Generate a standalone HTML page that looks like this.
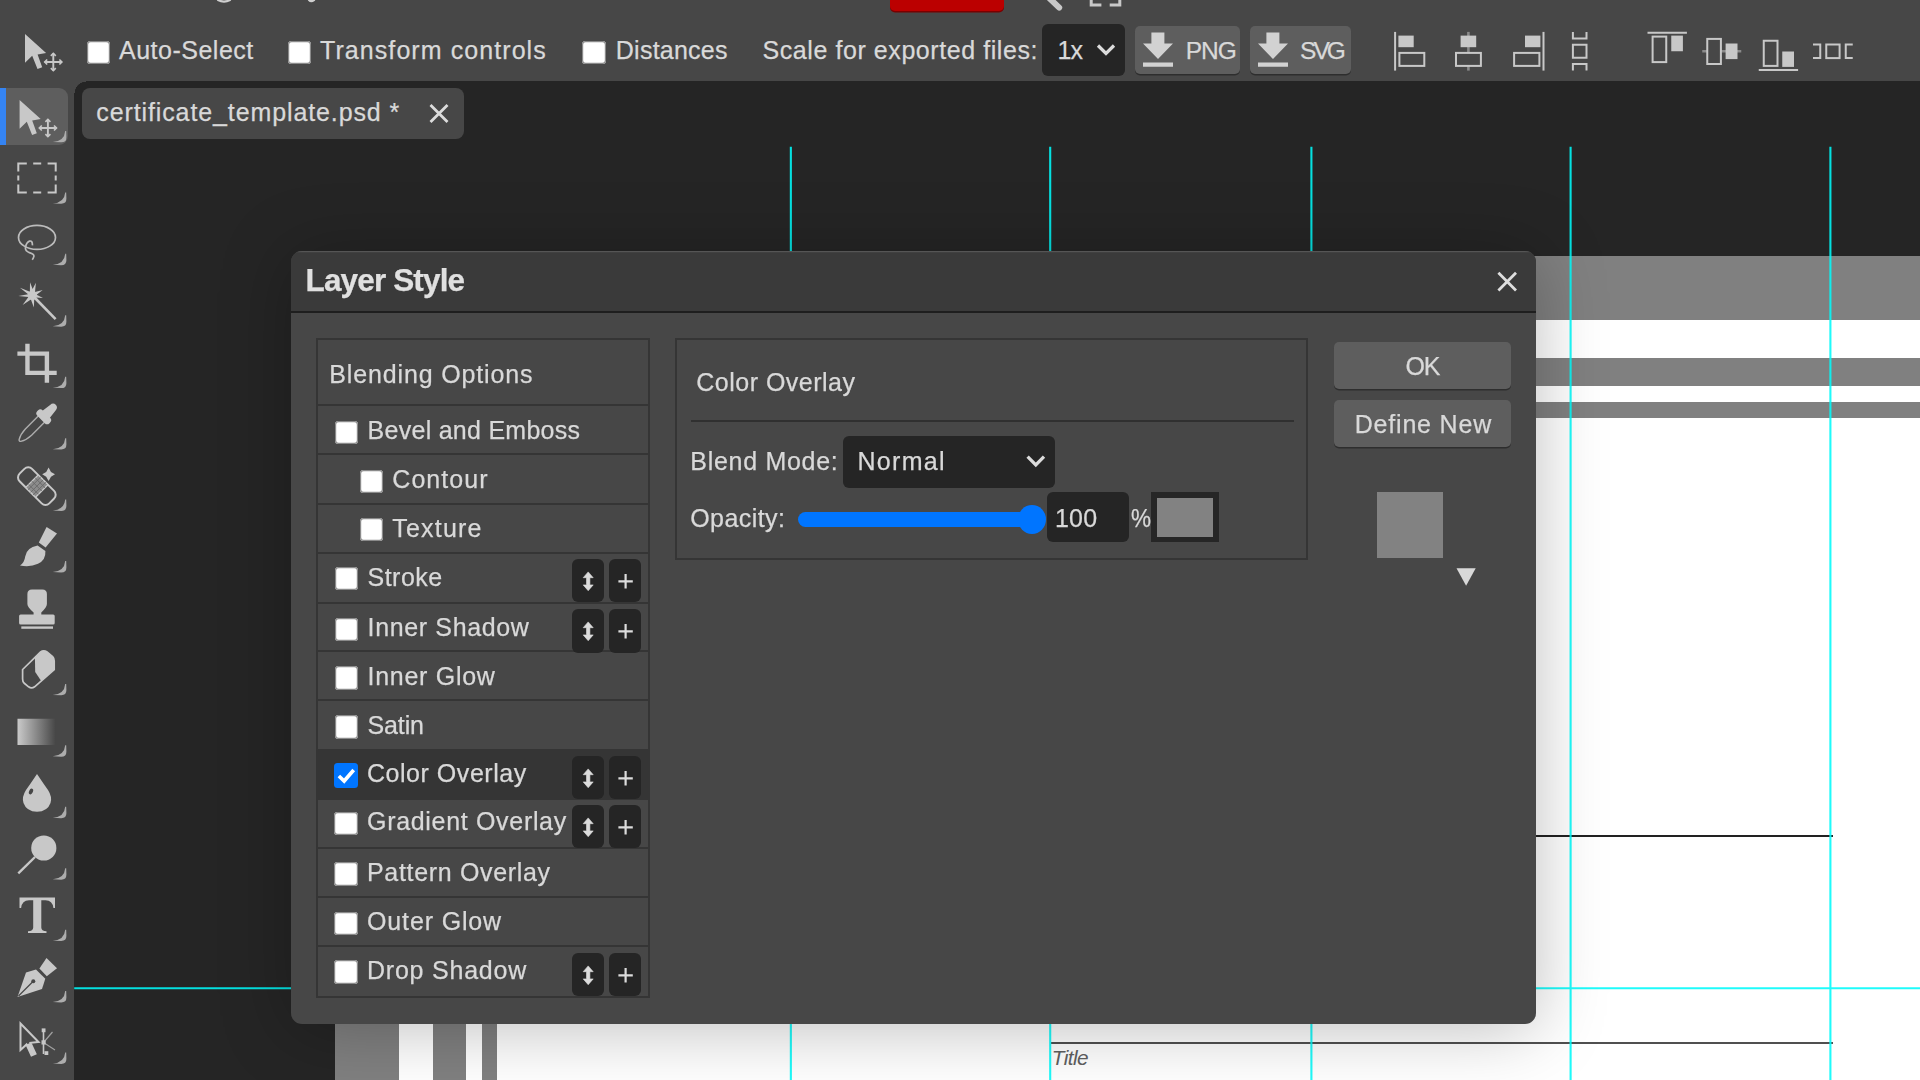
<!DOCTYPE html>
<html><head><meta charset="utf-8"><title>Photopea</title>
<style>
html,body{margin:0;padding:0;width:1920px;height:1080px;overflow:hidden;background:#474747}
body{position:relative;font-family:"Liberation Sans",sans-serif}
#w{position:absolute;left:0;top:0;width:1920px;height:1080px;overflow:hidden}
.b{position:absolute;display:block}
.t{position:absolute;white-space:pre;font-family:"Liberation Sans",sans-serif;-webkit-text-stroke:0.25px currentColor}
</style></head><body>
<div id="w">
<div class="b" style="left:74.20px;top:80.60px;width:1845.80px;height:999.40px;background:#252525;border-top-left-radius:11px;"></div>
<div class="b" style="left:335.4px;top:255.6px;width:1584.6px;height:824.4px;background:#fff;overflow:hidden">
<div class="b" style="left:0.00px;top:0.00px;width:1584.60px;height:64.60px;background:#808080"></div>
<div class="b" style="left:97.70px;top:102.10px;width:1486.90px;height:28.80px;background:#808080"></div>
<div class="b" style="left:146.50px;top:146.90px;width:1438.10px;height:15.20px;background:#808080"></div>
<div class="b" style="left:0.00px;top:0.00px;width:64.00px;height:824.40px;background:#808080"></div>
<div class="b" style="left:97.70px;top:102.10px;width:32.50px;height:722.30px;background:#808080"></div>
<div class="b" style="left:146.50px;top:146.90px;width:15.35px;height:677.50px;background:#808080"></div>
<div class="b" style="left:715.60px;top:579.20px;width:782.00px;height:2.00px;background:#222"></div>
<div class="b" style="left:715.60px;top:786.40px;width:782.00px;height:2.00px;background:#505050"></div>
</div>
<div class="t" style="left:1051.80px;top:1045.44px;font-size:20.8px;line-height:25px;letter-spacing:-0.601px;color:#606060;font-style:italic;-webkit-text-stroke:0;">Title</div>
<svg class="b" style="left:0;top:0" width="1920" height="1080" viewBox="0 0 1920 1080"><path d="M790.85,146.7V1080 M1050.2,146.7V1080 M1311.4,146.7V1080 M1570.6,146.7V1080 M1830.4,146.7V1080 M74.2,988.3H1920" stroke="#00fafa" stroke-opacity=".88" stroke-width="2.1" fill="none"/></svg>
<div class="b" style="left:0.00px;top:0.00px;width:1920.00px;height:80.60px;background:#474747;"></div>
<div class="b" style="left:74.2px;top:80.6px;width:12px;height:12px;background:radial-gradient(circle at 100% 100%, rgba(0,0,0,0) 11px, #474747 11.5px)"></div>
<div class="b" style="left:0.00px;top:80.60px;width:74.20px;height:999.40px;background:#474747;"></div>
<div class="b" style="left:889.70px;top:-10.00px;width:114.10px;height:21.00px;background:#bb0000;border-radius:5px;box-shadow:0 1.5px 0 #7a0000;"></div>
<svg class="b" style="left:0;top:0" width="1920" height="14" viewBox="0 0 1920 14"><g fill="none" stroke="#cfcfcf" stroke-width="2.2" stroke-linecap="round"><path d="M218,0 Q224,3.2 230,0"/><path d="M309,0 Q311,2.2 314,0.2"/><path d="M1046,-5 L1059.2,7.6" stroke-width="6" stroke="#c8c8c8"/><path d="M1091.2,-2 V5 H1101.4 M1119.8,-2 V5 H1109.7" stroke-width="3" stroke-linecap="butt" stroke="#c8c8c8"/></g></svg>
<div class="b" style="left:86.70px;top:40.50px;width:23.3px;height:23.3px;background:#fff;border-radius:3.5px;box-shadow:inset 0 0 0 1.2px #8a8a8a"></div>
<div class="t" style="left:119.00px;top:35.19px;font-size:25px;line-height:30px;letter-spacing:0.505px;color:#d9d9d9;">Auto-Select</div>
<div class="b" style="left:287.50px;top:40.50px;width:23.3px;height:23.3px;background:#fff;border-radius:3.5px;box-shadow:inset 0 0 0 1.2px #8a8a8a"></div>
<div class="t" style="left:320.00px;top:35.19px;font-size:25px;line-height:30px;letter-spacing:1.076px;color:#d9d9d9;">Transform controls</div>
<div class="b" style="left:582.30px;top:40.50px;width:23.3px;height:23.3px;background:#fff;border-radius:3.5px;box-shadow:inset 0 0 0 1.2px #8a8a8a"></div>
<div class="t" style="left:615.80px;top:35.19px;font-size:25px;line-height:30px;letter-spacing:0.244px;color:#d9d9d9;">Distances</div>
<div class="t" style="left:762.50px;top:35.19px;font-size:25px;line-height:30px;letter-spacing:0.573px;color:#d9d9d9;">Scale for exported files:</div>
<div class="b" style="left:1041.70px;top:24.20px;width:83.30px;height:51.60px;background:#252525;border-radius:6px;"></div>
<div class="t" style="left:1057.50px;top:35.19px;font-size:25px;line-height:30px;letter-spacing:-0.875px;color:#d9d9d9;">1x</div>
<svg class="b" style="left:1095px;top:42px" width="24" height="16" viewBox="0 0 24 16"><path d="M3,3.5 L11,11.5 L19,3.5" fill="none" stroke="#dcdcdc" stroke-width="3.2"/></svg>
<div class="b" style="left:1135.00px;top:25.80px;width:104.70px;height:48.40px;background:#5e5e5e;border-radius:5px;box-shadow:0 1.5px 0 #2e2e2e;"></div>
<div class="b" style="left:1250.00px;top:25.80px;width:100.80px;height:48.40px;background:#5e5e5e;border-radius:5px;box-shadow:0 1.5px 0 #2e2e2e;"></div>
<svg class="b" style="left:1141.30px;top:30px" width="34" height="40" viewBox="0 0 34 40"><path d="M10.4,2.5 H23.4 V13.5 H32 L17,29 L2,13.5 H10.4 Z M2,32.5 H32 V36.7 H2 Z" fill="#d2d2d2"/></svg>
<div class="t" style="left:1185.80px;top:35.86px;font-size:24.5px;line-height:29px;letter-spacing:-1.071px;color:#d9d9d9;">PNG</div>
<svg class="b" style="left:1256.30px;top:30px" width="34" height="40" viewBox="0 0 34 40"><path d="M10.4,2.5 H23.4 V13.5 H32 L17,29 L2,13.5 H10.4 Z M2,32.5 H32 V36.7 H2 Z" fill="#d2d2d2"/></svg>
<div class="t" style="left:1300.00px;top:35.86px;font-size:24.5px;line-height:29px;letter-spacing:-2.948px;color:#d9d9d9;">SVG</div>
<svg class="b" style="left:1380px;top:20px" width="500" height="60" viewBox="1380 20 500 60"><g fill="none" stroke="#c8c8c8" stroke-width="2"><path d="M1395.1,31.9 V70.6"/><rect x="1398.4" y="35.6" width="15.3" height="11.6" fill="#c8c8c8" stroke="none"/><rect x="1399.4" y="52.9" width="24.9" height="13"/><path d="M1468.4,31.9 V70.6" stroke="#8a8a8a" stroke-width="2.6"/><rect x="1460.6" y="35.6" width="15.6" height="11.6" fill="#c8c8c8" stroke="none"/><rect x="1456" y="52.9" width="24.9" height="13" fill="#474747"/><path d="M1543.5,31.9 V70.6"/><rect x="1525" y="35.6" width="15.4" height="11.6" fill="#c8c8c8" stroke="none"/><rect x="1514.1" y="52.9" width="25.3" height="13"/><path d="M1572.9,31.9 V38.4 H1586.5 V31.9"/><rect x="1572.9" y="44.75" width="13.6" height="13"/><path d="M1572.9,70.6 V64.1 H1586.5 V70.6"/><path d="M1647.5,32.8 H1686.9"/><rect x="1652.6" y="36.6" width="13.65" height="25.5"/><rect x="1671.25" y="35.6" width="11.65" height="15.65" fill="#c8c8c8" stroke="none"/><path d="M1702.25,51.3 H1741.25" stroke="#8a8a8a" stroke-width="2.6"/><rect x="1707.25" y="38.9" width="13.65" height="25.1" fill="#474747"/><rect x="1725.6" y="43.5" width="11.9" height="15.6" fill="#c8c8c8" stroke="none"/><path d="M1758.75,69.9 H1798.1"/><rect x="1763.75" y="40.75" width="13.75" height="25.15"/><rect x="1782.25" y="51.5" width="11.75" height="15.4" fill="#c8c8c8" stroke="none"/><path d="M1813,44.5 H1820.25 V58.1 H1813"/><rect x="1826.25" y="44.5" width="13.35" height="13.6"/><path d="M1852.75,44.5 H1845.75 V58.1 H1852.75"/></g></svg>
<svg class="b" style="left:25.3px;top:33.9px;overflow:visible" width="40" height="40"><path d="M0,0 V28.7 L7.2,21.7 L12.5,34.9 L17.2,33.2 L12.6,20.4 L21.1,19 Z" fill="#c8c8c8" stroke="none"/><g stroke="#c8c8c8" stroke-width="1.9" fill="none"><path d="M19.6,28 H37 M28.3,19.3 V36.7"/><path d="M22.2,25.5 L19.7,28 L22.2,30.5 M34.4,25.5 L36.9,28 L34.4,30.5 M25.8,21.9 L28.3,19.4 L30.8,21.9 M25.8,34.1 L28.3,36.6 L30.8,34.1" stroke-width="1.6"/></g></svg>
<div class="b" style="left:82.00px;top:88.30px;width:382.20px;height:50.70px;background:#474747;border-radius:8px;"></div>
<div class="t" style="left:96.25px;top:96.89px;font-size:25px;line-height:30px;letter-spacing:0.890px;color:#d9d9d9;">certificate_template.psd *</div>
<svg class="b" style="left:426px;top:101px" width="26" height="26" viewBox="426 101 26 26"><path d="M430.5,105 L447.5,122 M447.5,105 L430.5,122" stroke="#dcdcdc" stroke-width="2.8" fill="none"/></svg>
<div class="b" style="left:0.00px;top:88.40px;width:6.00px;height:56.40px;background:#3584f2;"></div>
<div class="b" style="left:6.00px;top:88.40px;width:61.60px;height:56.40px;background:#5e5e5e;border-radius:0 9px 9px 0;"></div>
<svg class="b" style="left:0;top:80px" width="74" height="1000" viewBox="0 80 74 1000"><g fill="none" stroke="#c8c8c8" stroke-width="2"><path d="M66.2,130.95 L66.4,137.15 Q66.5,142.35 61.2,142.35 L52.8,141.95 Q64.4,141.15 65.2,130.95 Z" fill="#adadad" stroke="none"/><path d="M66.2,192.39 L66.4,198.59 Q66.5,203.79 61.2,203.79 L52.8,203.39 Q64.4,202.59 65.2,192.39 Z" fill="#adadad" stroke="none"/><path d="M66.2,253.83 L66.4,260.03 Q66.5,265.23 61.2,265.23 L52.8,264.83 Q64.4,264.03 65.2,253.83 Z" fill="#adadad" stroke="none"/><path d="M66.2,315.27 L66.4,321.47 Q66.5,326.67 61.2,326.67 L52.8,326.27 Q64.4,325.47 65.2,315.27 Z" fill="#adadad" stroke="none"/><path d="M66.2,376.71 L66.4,382.91 Q66.5,388.11 61.2,388.11 L52.8,387.71 Q64.4,386.91 65.2,376.71 Z" fill="#adadad" stroke="none"/><path d="M66.2,438.15 L66.4,444.35 Q66.5,449.55 61.2,449.55 L52.8,449.15 Q64.4,448.35 65.2,438.15 Z" fill="#adadad" stroke="none"/><path d="M66.2,499.59 L66.4,505.79 Q66.5,510.99 61.2,510.99 L52.8,510.59 Q64.4,509.79 65.2,499.59 Z" fill="#adadad" stroke="none"/><path d="M66.2,561.03 L66.4,567.23 Q66.5,572.43 61.2,572.43 L52.8,572.03 Q64.4,571.23 65.2,561.03 Z" fill="#adadad" stroke="none"/><path d="M66.2,683.91 L66.4,690.11 Q66.5,695.31 61.2,695.31 L52.8,694.91 Q64.4,694.11 65.2,683.91 Z" fill="#adadad" stroke="none"/><path d="M66.2,745.35 L66.4,751.55 Q66.5,756.75 61.2,756.75 L52.8,756.35 Q64.4,755.55 65.2,745.35 Z" fill="#adadad" stroke="none"/><path d="M66.2,806.79 L66.4,812.99 Q66.5,818.19 61.2,818.19 L52.8,817.79 Q64.4,816.99 65.2,806.79 Z" fill="#adadad" stroke="none"/><path d="M66.2,868.23 L66.4,874.43 Q66.5,879.63 61.2,879.63 L52.8,879.23 Q64.4,878.43 65.2,868.23 Z" fill="#adadad" stroke="none"/><path d="M66.2,929.67 L66.4,935.87 Q66.5,941.07 61.2,941.07 L52.8,940.67 Q64.4,939.87 65.2,929.67 Z" fill="#adadad" stroke="none"/><path d="M66.2,991.11 L66.4,997.31 Q66.5,1002.51 61.2,1002.51 L52.8,1002.11 Q64.4,1001.31 65.2,991.11 Z" fill="#adadad" stroke="none"/><path d="M66.2,1052.55 L66.4,1058.75 Q66.5,1063.95 61.2,1063.95 L52.8,1063.55 Q64.4,1062.75 65.2,1052.55 Z" fill="#adadad" stroke="none"/><g transform="translate(19.6,100)"><path d="M0,0 V28.7 L7.2,21.7 L12.5,34.9 L17.2,33.2 L12.6,20.4 L21.1,19 Z" fill="#c8c8c8" stroke="none"/><g stroke="#c8c8c8" stroke-width="1.9" fill="none"><path d="M19.6,28 H37 M28.3,19.3 V36.7"/><path d="M22.2,25.5 L19.7,28 L22.2,30.5 M34.4,25.5 L36.9,28 L34.4,30.5 M25.8,21.9 L28.3,19.4 L30.8,21.9 M25.8,34.1 L28.3,36.6 L30.8,34.1" stroke-width="1.6"/></g></g><path d="M18.3,171.6 V163.5 H26.8 M33.2,163.5 H41.2 M47.6,163.5 H55.7 V171.6 M55.7,175.6 V180.6 M55.7,184.6 V192.4 H47.6 M41.2,192.4 H33.2 M26.8,192.4 H18.3 V184.6 M18.3,180.6 V175.6" stroke-width="2"/><ellipse cx="37" cy="237.4" rx="18.5" ry="12" stroke-width="1.7" stroke="#bcbcbc"/><path d="M32.4,245.4 Q32.6,240.4 29.5,241.1 Q26.3,242.4 25.6,247 Q24.6,250.6 29.4,252.6 Q34.6,254.1 33.8,256.6 Q33.3,258.6 32.2,259.8" stroke-width="1.7" stroke="#bcbcbc"/><path d="M35,298 L55.6,319.2" stroke-width="2.6"/><circle cx="32.3" cy="295.3" r="4.6" fill="#c8c8c8" stroke="none"/><path d="M30.0,282.3 L32.6,289.0 L35.9,282.7 L35.0,292.0 L42.7,290.1 L36.6,294.8 L43.0,297.9 L36.0,297.4 L37.2,300.2 L34.2,299.2 L33.9,307.6 L30.9,299.4 L22.6,305.0 L28.4,297.0 L18.4,295.9 L28.1,294.2 L20.0,287.8 L29.9,291.7 Z" fill="#c8c8c8" stroke="none"/><path d="M27.45,343.7 V372.9 H56.7 M17.4,353.65 H46.9 V382.8" stroke-width="4.4"/><g transform="translate(43.3,417.2) rotate(45)"><path d="M-4.4,2 V21 Q-4.2,28 -1.2,33 Q0,34.4 1.2,33 Q4.2,28 4.4,21 V2" stroke-width="1.4" stroke="#adadad"/><rect x="-8.6" y="-4.4" width="17.2" height="7.6" rx="3.4" fill="#c8c8c8" stroke="none"/><path d="M-5.4,-2 L-3.9,-13.5 Q-3.6,-17.6 0,-17.6 Q3.6,-17.6 3.9,-13.5 L5.4,-2 Z" fill="#c8c8c8" stroke="none"/></g><g transform="rotate(45 36.85 486.1)"><rect x="15.85" y="477.3" width="42" height="17.6" rx="5.4" stroke-width="2"/><rect x="29.9" y="478" width="13.9" height="16.2" fill="#8c8c8c" stroke="none"/><path d="M29.9,477.3 V494.9 M43.8,477.3 V494.9" stroke-width="1.3"/><path d="M33.2,477 V495 M36.85,477 V495 M40.5,477 V495 M30,481.5 H44 M30,486.1 H44 M30,490.7 H44" stroke="#6a6a6a" stroke-width="0.9"/></g><path d="M48.6,467.6 L51,471.9 L55,474.3 L51,476.7 L48.6,481 L46.2,476.7 L42.2,474.3 L46.2,471.9 Z" fill="#c8c8c8" stroke="none"/><path d="M46.6,527 L57,533.6 L45.6,547.6 L38.8,542.6 Z" fill="#c8c8c8" stroke="none"/><path d="M37.6,545.5 L45.4,551 Q46,560 38,563.8 Q30,567.5 20,565.5 Q24.5,562.5 25.2,556.5 Q26.5,547.5 37.6,545.5 Z" fill="#c8c8c8" stroke="none"/><path d="M27.4,594 Q27.4,589.4 32,589.4 H42.3 Q46.9,589.4 46.9,594 V604 Q46.9,607 41.3,612.6 V614.4 H53.2 Q54.7,614.4 54.7,615.9 V622.9 Q54.7,624.4 53.2,624.4 H20.6 Q19.1,624.4 19.1,622.9 V615.9 Q19.1,614.4 20.6,614.4 H33.6 V612.6 Q27.4,607 27.4,604 Z" fill="#c8c8c8" stroke="none"/><path d="M21.3,627.6 H53" stroke-width="2.4"/><path d="M22.6,669.5 L40.6,652 Q43.6,649.6 47,652 L52.6,656.6 Q54.2,658.2 54.2,661 V669.6 L34.6,686.8 Q31.6,689 28.6,686.8 L24,683 Q22.6,681.6 22.6,679 Z" stroke-width="1.7"/><path d="M34.9,657.6 L40.6,652 Q43.6,649.6 47,652 L52.6,656.6 Q54.2,658.2 54.2,661 V669.6 L41.2,681 L35.2,672 Z" fill="#c8c8c8" stroke="none"/><defs><linearGradient id="gr" x1="0" x2="1" y1="0" y2="0"><stop offset="0" stop-color="#cacaca"/><stop offset="1" stop-color="#474747"/></linearGradient></defs><rect x="17.5" y="718.75" width="38" height="26.25" fill="url(#gr)" stroke="none"/><path d="M37,774 Q43,783 48,790 Q52.5,797 50.5,803 Q47.5,811.5 37,811.8 Q26.5,811.5 23.5,803 Q21.5,797 26,790 Q31,783 37,774 Z" fill="#c8c8c8" stroke="none"/><ellipse cx="31" cy="791.5" rx="1.9" ry="3" transform="rotate(25 31 791.5)" fill="#474747" stroke="none"/><circle cx="43.8" cy="848" r="12.6" fill="#c8c8c8" stroke="none"/><path d="M35,857 L18.3,873.3" stroke-width="2.4"/><path d="M19.5,897.5 H55 V908 H53.4 Q52.5,900.2 45.5,900.2 H41.3 V927.5 Q41.3,931 46.5,931.3 V933 H28 V931.3 Q33.2,931 33.2,927.5 V900.2 H29 Q22,900.2 21.1,908 H19.5 Z" fill="#c8c8c8" stroke="none"/><path d="M46.5,958 L57,968.2 L46.8,976.2 L39.4,968.4 Z" fill="#c8c8c8" stroke="none"/><path d="M36,969.5 L45.3,978.7 L42,989 L17.5,997 L26,972.5 Z" fill="#c8c8c8" stroke="none"/><path d="M18.5,996 L32.5,982" stroke="#474747" stroke-width="1.2"/><circle cx="33.3" cy="981.2" r="2" fill="#474747" stroke="none"/><path d="M20.5,1023.5 V1050 L26.5,1044.5 L31.5,1055.5 L35.5,1053.8 L30.5,1042.8 L38.5,1042 Z" stroke-width="2" /><path d="M26.5,1044.5 L31.5,1055.5 L35.5,1053.8 L30.5,1042.8 Z" fill="#c8c8c8" stroke="none"/><path d="M43.5,1031 V1054" stroke-width="1.6"/><path d="M43.5,1042.5 L52.5,1032 M43.5,1042.5 L55,1050" stroke-width="1.2" stroke="#a0a0a0"/><rect x="41.7" y="1028.4" width="3.8" height="3.8" fill="#c8c8c8" stroke="none"/><rect x="41.5" y="1040.3" width="4.2" height="4.2" fill="#c8c8c8" stroke="none"/><rect x="44.5" y="1051.2" width="3.8" height="3.8" fill="#c8c8c8" stroke="none"/></g></svg>
<div class="b" style="left:290.6px;top:250.6px;width:1245.4px;height:773.2px;background:#474747;border-radius:11px;box-shadow:0 5px 70px rgba(0,0,0,.26);overflow:hidden"><div class="b" style="left:0;top:0;width:100%;height:60px;background:#3a3a3a;box-shadow:inset 0 1.3px 0 #555"></div><div class="b" style="left:0;top:60px;width:100%;height:2px;background:#1e1e1e"></div></div>
<div class="b" style="left:0;top:0;width:1920px;height:1080px;will-change:transform">
<div class="t" style="left:305.60px;top:260.99px;font-size:31.5px;line-height:38px;letter-spacing:-0.865px;color:#e0e0e0;font-weight:700;">Layer Style</div>
<svg class="b" style="left:1494px;top:268px" width="27" height="27" viewBox="1494 268 27 27"><path d="M1498.4,272.8 L1516,290.4 M1516,272.8 L1498.4,290.4" stroke="#dedede" stroke-width="2.8" fill="none"/></svg>
<div class="b" style="left:316.00px;top:338.00px;width:334.00px;height:660.00px;background:#353535;"></div>
<div class="b" style="left:318.00px;top:340.00px;width:330.00px;height:656.00px;background:#474747;"></div>
<div class="b" style="left:317.90px;top:750.00px;width:329.90px;height:48.60px;background:#353535;"></div>
<div class="b" style="left:317.90px;top:404.30px;width:329.90px;height:2.00px;background:#353535;"></div>
<div class="b" style="left:317.90px;top:453.20px;width:329.90px;height:2.00px;background:#353535;"></div>
<div class="b" style="left:317.90px;top:502.70px;width:329.90px;height:2.00px;background:#353535;"></div>
<div class="b" style="left:317.90px;top:552.30px;width:329.90px;height:2.00px;background:#353535;"></div>
<div class="b" style="left:317.90px;top:601.50px;width:329.90px;height:2.00px;background:#353535;"></div>
<div class="b" style="left:317.90px;top:650.20px;width:329.90px;height:2.00px;background:#353535;"></div>
<div class="b" style="left:317.90px;top:699.10px;width:329.90px;height:2.00px;background:#353535;"></div>
<div class="b" style="left:317.90px;top:748.60px;width:329.90px;height:2.00px;background:#353535;"></div>
<div class="b" style="left:317.90px;top:798.40px;width:329.90px;height:2.00px;background:#353535;"></div>
<div class="b" style="left:317.90px;top:847.20px;width:329.90px;height:2.00px;background:#353535;"></div>
<div class="b" style="left:317.90px;top:895.50px;width:329.90px;height:2.00px;background:#353535;"></div>
<div class="b" style="left:317.90px;top:944.60px;width:329.90px;height:2.00px;background:#353535;"></div>
<div class="t" style="left:329.30px;top:358.69px;font-size:25px;line-height:30px;letter-spacing:0.855px;color:#d9d9d9;">Blending Options</div>
<div class="b" style="left:334.60px;top:421.00px;width:23.3px;height:23.3px;background:#fff;border-radius:3.5px;box-shadow:inset 0 0 0 1.2px #8a8a8a"></div>
<div class="t" style="left:367.60px;top:415.39px;font-size:25px;line-height:30px;letter-spacing:0.267px;color:#d9d9d9;">Bevel and Emboss</div>
<div class="b" style="left:359.90px;top:469.60px;width:23.3px;height:23.3px;background:#fff;border-radius:3.5px;box-shadow:inset 0 0 0 1.2px #8a8a8a"></div>
<div class="t" style="left:392.30px;top:463.99px;font-size:25px;line-height:30px;letter-spacing:1.050px;color:#d9d9d9;">Contour</div>
<div class="b" style="left:359.90px;top:518.20px;width:23.3px;height:23.3px;background:#fff;border-radius:3.5px;box-shadow:inset 0 0 0 1.2px #8a8a8a"></div>
<div class="t" style="left:392.30px;top:512.59px;font-size:25px;line-height:30px;letter-spacing:1.183px;color:#d9d9d9;">Texture</div>
<div class="b" style="left:334.60px;top:567.20px;width:23.3px;height:23.3px;background:#fff;border-radius:3.5px;box-shadow:inset 0 0 0 1.2px #8a8a8a"></div>
<div class="t" style="left:367.60px;top:561.59px;font-size:25px;line-height:30px;letter-spacing:0.450px;color:#d9d9d9;">Stroke</div>
<div class="b" style="left:571.60px;top:558.70px;width:32.50px;height:43.30px;background:#252525;border-radius:6px;"></div>
<div class="b" style="left:608.70px;top:558.70px;width:32.50px;height:43.30px;background:#252525;border-radius:6px;"></div>
<svg class="b" style="left:571.6px;top:558.70px" width="70" height="44" viewBox="571.6 558.70 70 44"><path d="M587.8,571.60 L592.8,577.40 H589.5 V584.60 H592.8 L587.8,590.40 L582.8,584.60 H586.1 V577.40 H582.8 Z" fill="#dcdcdc" stroke="#dcdcdc" stroke-width="0.6" stroke-linejoin="round"/><path d="M618,581.00 H632.4 M625.2,573.80 V588.20" stroke="#dcdcdc" stroke-width="2.2" fill="none"/></svg>
<div class="b" style="left:334.60px;top:617.70px;width:23.3px;height:23.3px;background:#fff;border-radius:3.5px;box-shadow:inset 0 0 0 1.2px #8a8a8a"></div>
<div class="t" style="left:367.60px;top:612.09px;font-size:25px;line-height:30px;letter-spacing:0.639px;color:#d9d9d9;">Inner Shadow</div>
<div class="b" style="left:571.60px;top:609.30px;width:32.50px;height:43.30px;background:#252525;border-radius:6px;"></div>
<div class="b" style="left:608.70px;top:609.30px;width:32.50px;height:43.30px;background:#252525;border-radius:6px;"></div>
<svg class="b" style="left:571.6px;top:609.30px" width="70" height="44" viewBox="571.6 609.30 70 44"><path d="M587.8,622.20 L592.8,628.00 H589.5 V635.20 H592.8 L587.8,641.00 L582.8,635.20 H586.1 V628.00 H582.8 Z" fill="#dcdcdc" stroke="#dcdcdc" stroke-width="0.6" stroke-linejoin="round"/><path d="M618,631.60 H632.4 M625.2,624.40 V638.80" stroke="#dcdcdc" stroke-width="2.2" fill="none"/></svg>
<div class="b" style="left:334.60px;top:666.30px;width:23.3px;height:23.3px;background:#fff;border-radius:3.5px;box-shadow:inset 0 0 0 1.2px #8a8a8a"></div>
<div class="t" style="left:367.60px;top:660.69px;font-size:25px;line-height:30px;letter-spacing:0.711px;color:#d9d9d9;">Inner Glow</div>
<div class="b" style="left:334.60px;top:715.30px;width:23.3px;height:23.3px;background:#fff;border-radius:3.5px;box-shadow:inset 0 0 0 1.2px #8a8a8a"></div>
<div class="t" style="left:367.60px;top:709.69px;font-size:25px;line-height:30px;letter-spacing:-0.150px;color:#d9d9d9;">Satin</div>
<div class="b" style="left:333.80px;top:763.30px;width:24.7px;height:24.7px;background:#0075ff;border-radius:3.5px"><svg width="24.7" height="24.7" viewBox="0 0 23.3 23.3" style="position:absolute;left:0;top:0"><path d="M4.6,12.2 L9.6,17 L18.6,6.6" fill="none" stroke="#fff" stroke-width="3.4"/></svg></div>
<div class="t" style="left:367.00px;top:757.99px;font-size:25px;line-height:30px;letter-spacing:0.531px;color:#d9d9d9;">Color Overlay</div>
<div class="b" style="left:571.60px;top:755.50px;width:32.50px;height:43.30px;background:#252525;border-radius:6px;"></div>
<div class="b" style="left:608.70px;top:755.50px;width:32.50px;height:43.30px;background:#252525;border-radius:6px;"></div>
<svg class="b" style="left:571.6px;top:755.50px" width="70" height="44" viewBox="571.6 755.50 70 44"><path d="M587.8,768.40 L592.8,774.20 H589.5 V781.40 H592.8 L587.8,787.20 L582.8,781.40 H586.1 V774.20 H582.8 Z" fill="#dcdcdc" stroke="#dcdcdc" stroke-width="0.6" stroke-linejoin="round"/><path d="M618,777.80 H632.4 M625.2,770.60 V785.00" stroke="#dcdcdc" stroke-width="2.2" fill="none"/></svg>
<div class="b" style="left:334.40px;top:811.60px;width:23.3px;height:23.3px;background:#fff;border-radius:3.5px;box-shadow:inset 0 0 0 1.2px #8a8a8a"></div>
<div class="t" style="left:367.00px;top:805.99px;font-size:25px;line-height:30px;letter-spacing:0.683px;color:#d9d9d9;">Gradient Overlay</div>
<div class="b" style="left:571.60px;top:804.50px;width:32.50px;height:43.30px;background:#252525;border-radius:6px;"></div>
<div class="b" style="left:608.70px;top:804.50px;width:32.50px;height:43.30px;background:#252525;border-radius:6px;"></div>
<svg class="b" style="left:571.6px;top:804.50px" width="70" height="44" viewBox="571.6 804.50 70 44"><path d="M587.8,817.40 L592.8,823.20 H589.5 V830.40 H592.8 L587.8,836.20 L582.8,830.40 H586.1 V823.20 H582.8 Z" fill="#dcdcdc" stroke="#dcdcdc" stroke-width="0.6" stroke-linejoin="round"/><path d="M618,826.80 H632.4 M625.2,819.60 V834.00" stroke="#dcdcdc" stroke-width="2.2" fill="none"/></svg>
<div class="b" style="left:334.40px;top:862.35px;width:23.3px;height:23.3px;background:#fff;border-radius:3.5px;box-shadow:inset 0 0 0 1.2px #8a8a8a"></div>
<div class="t" style="left:367.00px;top:856.74px;font-size:25px;line-height:30px;letter-spacing:0.670px;color:#d9d9d9;">Pattern Overlay</div>
<div class="b" style="left:334.40px;top:911.60px;width:23.3px;height:23.3px;background:#fff;border-radius:3.5px;box-shadow:inset 0 0 0 1.2px #8a8a8a"></div>
<div class="t" style="left:367.00px;top:905.99px;font-size:25px;line-height:30px;letter-spacing:0.861px;color:#d9d9d9;">Outer Glow</div>
<div class="b" style="left:334.40px;top:960.35px;width:23.3px;height:23.3px;background:#fff;border-radius:3.5px;box-shadow:inset 0 0 0 1.2px #8a8a8a"></div>
<div class="t" style="left:367.00px;top:954.74px;font-size:25px;line-height:30px;letter-spacing:0.775px;color:#d9d9d9;">Drop Shadow</div>
<div class="b" style="left:571.60px;top:952.50px;width:32.50px;height:43.30px;background:#252525;border-radius:6px;"></div>
<div class="b" style="left:608.70px;top:952.50px;width:32.50px;height:43.30px;background:#252525;border-radius:6px;"></div>
<svg class="b" style="left:571.6px;top:952.50px" width="70" height="44" viewBox="571.6 952.50 70 44"><path d="M587.8,965.40 L592.8,971.20 H589.5 V978.40 H592.8 L587.8,984.20 L582.8,978.40 H586.1 V971.20 H582.8 Z" fill="#dcdcdc" stroke="#dcdcdc" stroke-width="0.6" stroke-linejoin="round"/><path d="M618,974.80 H632.4 M625.2,967.60 V982.00" stroke="#dcdcdc" stroke-width="2.2" fill="none"/></svg>
<div class="b" style="left:675.00px;top:338.00px;width:633.00px;height:222.00px;background:#353535;"></div>
<div class="b" style="left:676.60px;top:340.00px;width:629.60px;height:218.40px;background:#474747;"></div>
<div class="t" style="left:696.25px;top:366.59px;font-size:25px;line-height:30px;letter-spacing:0.490px;color:#d9d9d9;">Color Overlay</div>
<div class="b" style="left:690.60px;top:419.80px;width:603.70px;height:2.10px;background:#303030;"></div>
<div class="t" style="left:690.25px;top:445.99px;font-size:25px;line-height:30px;letter-spacing:0.713px;color:#d9d9d9;">Blend Mode:</div>
<div class="b" style="left:842.50px;top:435.60px;width:212.20px;height:52.20px;background:#252525;border-radius:6px;"></div>
<div class="t" style="left:857.50px;top:445.99px;font-size:25px;line-height:30px;letter-spacing:1.295px;color:#d9d9d9;">Normal</div>
<svg class="b" style="left:1022px;top:450px" width="28" height="22" viewBox="1022 450 28 22"><path d="M1027.6,456.6 L1035.8,464.8 L1044,456.6" fill="none" stroke="#dcdcdc" stroke-width="3.3"/></svg>
<div class="t" style="left:690.25px;top:503.49px;font-size:25px;line-height:30px;letter-spacing:0.429px;color:#d9d9d9;">Opacity:</div>
<div class="b" style="left:797.50px;top:511.90px;width:242.50px;height:15.00px;background:#0075ff;border-radius:7.5px;"></div>
<div class="b" style="left:1018.00px;top:504.80px;width:28.40px;height:29.20px;background:#0075ff;border-radius:50%;"></div>
<div class="b" style="left:1047.30px;top:492.25px;width:81.45px;height:49.95px;background:#252525;border-radius:6px;"></div>
<div class="t" style="left:1054.90px;top:503.09px;font-size:25px;line-height:30px;letter-spacing:0.275px;color:#d9d9d9;">100</div>
<div class="t" style="left:1130.80px;top:503.09px;font-size:25px;line-height:30px;letter-spacing:0.000px;color:#d9d9d9;transform:scaleX(.9);transform-origin:0 50%;">%</div>
<div class="b" style="left:1151.00px;top:492.25px;width:68.00px;height:49.95px;background:#262626;"></div>
<div class="b" style="left:1156.50px;top:498.00px;width:56.90px;height:39.00px;background:#828282;"></div>
<div class="b" style="left:1333.60px;top:341.50px;width:177.80px;height:47.10px;background:#5e5e5e;border-radius:5px;box-shadow:0 1.5px 0 #2e2e2e;"></div>
<div class="t" style="left:1405.50px;top:350.89px;font-size:25px;line-height:30px;letter-spacing:-1.125px;color:#d9d9d9;">OK</div>
<div class="b" style="left:1333.60px;top:400.30px;width:177.80px;height:46.70px;background:#5e5e5e;border-radius:5px;box-shadow:0 1.5px 0 #2e2e2e;"></div>
<div class="t" style="left:1354.70px;top:409.19px;font-size:25px;line-height:30px;letter-spacing:0.811px;color:#d9d9d9;">Define New</div>
<div class="b" style="left:1376.70px;top:492.00px;width:66.30px;height:66.40px;background:#828282;"></div>
<svg class="b" style="left:1454px;top:566px" width="24" height="22" viewBox="1454 566 24 22"><path d="M1456.5,568.2 H1475.7 L1466.1,585.8 Z" fill="#d8d8d8"/></svg>
</div>
</div>
</body></html>
